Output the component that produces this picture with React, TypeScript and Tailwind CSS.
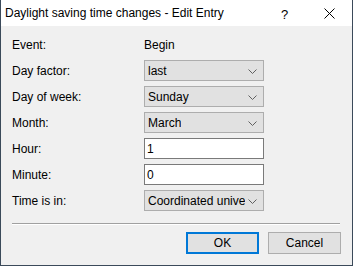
import React from "react";

const Chevron = () => (
  <svg width="9" height="5" viewBox="0 0 9 5" className="absolute right-[6px] top-[8px]">
    <path d="M0.5 0.5 L4.5 4.5 L8.5 0.5" fill="none" stroke="#606060" strokeWidth="1" />
  </svg>
);

const Select = ({ value }: { value: string }) => (
  <div className="relative w-[120px] h-[21px] bg-[#e1e1e1] border border-[#adadad] pl-[3px] flex items-center overflow-hidden whitespace-nowrap text-[12px] text-black">
    <span className="block max-w-[97px] overflow-hidden">{value}</span>
    <Chevron />
  </div>
);

const Input = ({ value }: { value: string }) => (
  <div className="w-[120px] h-[21px] bg-white border border-[#7a7a7a] pl-[2px] flex items-center text-[12px] text-black">
    {value}
  </div>
);

export default function App() {
  const rows: [string, React.ReactNode][] = [
    ["Event:", <div className="h-[21px] flex items-center text-[12px]">Begin</div>],
    ["Day factor:", <Select value="last" />],
    ["Day of week:", <Select value="Sunday" />],
    ["Month:", <Select value="March" />],
    ["Hour:", <Input value="1" />],
    ["Minute:", <Input value="0" />],
    ["Time is in:", <Select value="Coordinated universal time" />],
  ];
  return (
    <div
      className="w-[353px] h-[266px] flex flex-col border-l border-r border-b border-[#3b4a5a] bg-white text-black"
      style={{ fontFamily: '"Liberation Sans", "Noto Sans", sans-serif' }}
    >
      <div className="h-[26px] flex items-center bg-white relative shrink-0">
        <span className="pl-[4px] text-[12px]">Daylight saving time changes - Edit Entry</span>
        <span className="absolute left-[280px] top-[5px] text-[13px]">?</span>
        <svg width="11" height="11" viewBox="0 0 11 11" className="absolute left-[323px] top-[8px]">
          <path d="M0.5 0.5 L10.5 10.5 M10.5 0.5 L0.5 10.5" stroke="#000" strokeWidth="1" />
        </svg>
      </div>
      <div className="flex-1 bg-[#f0f0f0] flex flex-col pl-[11px] pr-[11px] pt-[8px]">
        <div className="flex flex-col gap-[5px]">
          {rows.map(([label, ctrl]) => (
            <div key={label} className="flex items-center h-[21px]">
              <div className="w-[132px] text-[12px]">{label}</div>
              {ctrl}
            </div>
          ))}
        </div>
        <div className="mt-[12px] h-[1px] bg-[#a0a0a0] mr-[1px] border-b border-white box-content" />
        <div className="mt-[7px] flex justify-end gap-[9px]">
          <div className="w-[73px] h-[22px] border-2 border-[#0078d7] bg-[#e1e1e1] flex items-center justify-center text-[12px]">OK</div>
          <div className="w-[73px] h-[22px] border border-[#adadad] bg-[#e1e1e1] flex items-center justify-center text-[12px]">Cancel</div>
        </div>
      </div>
    </div>
  );
}
